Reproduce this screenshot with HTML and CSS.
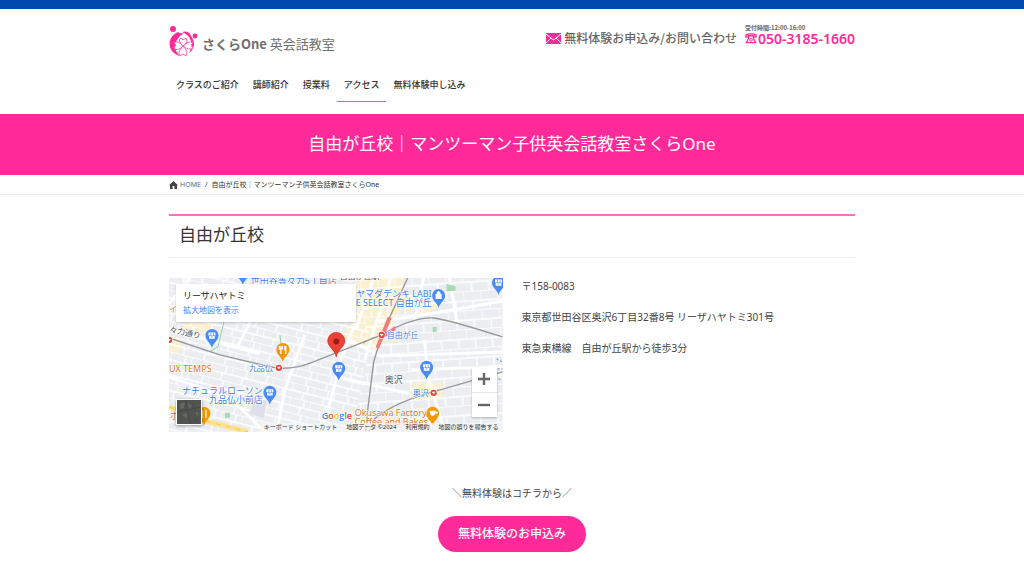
FILE: index.html
```html
<!DOCTYPE html>
<html lang="ja">
<head>
<meta charset="utf-8">
<meta name="viewport" content="width=device-width, initial-scale=1">
<title>自由が丘校｜マンツーマン子供英会話教室さくらOne</title>
<link rel="stylesheet" href="styles.css">
</head>
<body>
<header class="site-header">
  <div class="container">
    <div class="header-top">
      <a class="logo" href="#">
        <svg class="logo-mark" viewBox="0 0 30 34" aria-hidden="true">
          <circle cx="4" cy="4" r="3" fill="#ff2a9a"/><circle cx="26" cy="11" r="2.400" fill="#ff2a9a"/>
          <path d="M9 7C-3 12-2 28 11 31C4 25 4 15 15 8Q11 9 9 7Z" fill="#ff2a9a"/>
          <path d="M13 7Q20 5 22 11Q29 21 20 28Q25 19 20 12Q17 8 13 7Z" fill="#ff2a9a"/>
          <path d="M14 21Q8 15 12 13L14 15L17 13Q20 17 14 21Q20 15 24 18L22 20L24 23Q20 26 14 21Q20 27 17 31L14 29L11 31Q8 27 14 21Q8 27 5 23L7 20L5 18Q9 15 14 21Z" fill="#fff" stroke="#ff5fb3" stroke-width="1"/>
        </svg>
        <span class="logo-name"><b>さくらOne</b> 英会話教室</span>
      </a>
      <div class="contact">
        <a class="inquiry" href="#">
          <svg class="mail" viewBox="0 0 15 11" aria-hidden="true"><path d="M0 0H15V11H0Z" fill="#ff2a9a"/><path d="M0 1L7.500 7L15 1M0 10L5 5M15 10L10 5" fill="none" stroke="#fff"/></svg>
          無料体験お申込み/お問い合わせ
        </a>
        <div class="phone">
          <span class="hours">受付時間:12:00-16:00</span>
          <a class="number" href="tel:050-3185-1660">
            <svg class="tel" viewBox="0 0 13 11" aria-hidden="true"><path d="M1 4V1.500Q6.500-.5 12 1.500V4H9.500V2.500H3.500V4Z M4 3V5L1.500 10H11.500L9 5V3" fill="none" stroke="#ff2a9a" stroke-width="1.400"/><circle cx="6.500" cy="7" r="1.500" fill="none" stroke="#ff2a9a"/></svg>050-3185-1660</a>
        </div>
      </div>
    </div>
    <nav class="main-nav">
      <a href="#">クラスのご紹介</a>
      <a href="#">講師紹介</a>
      <a href="#">授業料</a>
      <a class="current" href="#" aria-current="page">アクセス</a>
      <a href="#">無料体験申し込み</a>
    </nav>
  </div>
</header>
<div class="page-banner"><h1>自由が丘校｜マンツーマン子供英会話教室さくらOne</h1></div>
<nav class="breadcrumb" aria-label="パンくずリスト">
  <div class="container crumbs">
    <a href="#"><svg class="home" viewBox="0 0 9 8" aria-hidden="true"><path d="M4.500 0L9 4.200H8V8H5.400V5H3.600V8H1V4.200H0Z" fill="#444"/></svg>HOME</a>
    <span>/</span>
    <span class="here">自由が丘校｜マンツーマン子供英会話教室さくらOne</span>
  </div>
</nav>
<main class="container">
  <h2 class="section-title">自由が丘校</h2>
  <div class="access">
    <div class="map">
      <svg class="map-art" viewBox="169 278 334 154" preserveAspectRatio="xMidYMid slice" role="img" aria-label="自由が丘周辺の地図">
        <defs>
          <pattern id="streets-a" width="21" height="15" patternUnits="userSpaceOnUse" patternTransform="rotate(14)"><path d="M0 0H21M0 8H21M0 0V8M12 8V15M15 0V8" fill="none" stroke="#fff" stroke-width="1.300"/></pattern>
          <pattern id="streets-b" width="17" height="19" patternUnits="userSpaceOnUse" patternTransform="rotate(-4)"><path d="M0 0H17M0 10H17M0 0V10M9 10V19" fill="none" stroke="#fff" stroke-width="1.300"/></pattern>
          <g id="pin"><path d="M0 12C-1 7-6.500 5-6.500-.5A6.500 6.500 0 0 1 6.500-.5C6.500 5 1 7 0 12Z"/></g>
          <g id="shop"><use href="#pin" fill="#4a8cf5"/><path d="M-3.500-3.500H3.500V-.5H-3.500ZM-2.800 0H2.800V2.800H-2.800Z" fill="#fff"/><path d="M-1 0V-3M1.500 0V-3M-1 1H1" stroke="#4a8cf5" stroke-width=".7"/></g>
          <g id="station"><circle r="3.800" fill="#fff"/><circle r="3.200" fill="#e5453a"/><path d="M-2-1H2L0 1.500Z" fill="#fff"/></g>
        </defs>
        <rect x="169" y="278" width="334" height="154" fill="#ebedf0"/>
        <path d="M356 278H404L398 318L372 352L340 340L356 318ZM400 290L440 305L425 315L400 308ZM169 335L182 339L178 354L169 352ZM411 383H443V400H411ZM185 322L215 324L210 334L183 330Z" fill="#fbf1d2"/>
        <path d="M169 278H350L372 340L352 432H169Z" fill="url(#streets-a)"/>
        <path d="M350 278H503V432H352L372 340Z" fill="url(#streets-b)"/>
        <g fill="none" stroke="#fff" stroke-width="3">
          <path d="M356 322L341 360L335 385L322 432M391 278L365 360M169 304L190 278M169 377L230 398L265 432M305 335L285 390L277 432M338 377L410 394M375 322Q440 313 503 301M412 370L503 367M424 278L415 320M425 340L428 375L445 432M374 278L356 330M250 322L237 348M169 330L260 354M450 278L458 325M350 340L380 356L503 352"/>
        </g>
        <path d="M224 322L218 347L209 352M280 335L282 349M363 344L374 337" fill="none" stroke="#96cfaa"/>
        <path d="M447 284L456 286V291H447ZM433 327H437V332H433ZM225 413H230V418H225Z" fill="#a8d8b4"/>
        <path d="M254 403L267 400L264 418L249 414Z" fill="#dde0e9"/>
        <path d="M169 407L208 422L248 432" fill="none" stroke="#fde293" stroke-width="5"/>
        <path d="M169 407L208 422L248 432" fill="none" stroke="#f4c84c" stroke-dasharray="5 5"/>
        <g fill="none" stroke="#999" stroke-width="1.400">
          <path d="M169 338L220 355L266 366Q288 372 311 363L382 335Q413 317 434 318Q450 320 503 337"/>
          <path d="M408 278L382 335L374 362L368 410L366 432M503 372L444 389Q394 402 375 419L369 432"/>
        </g>
        <path d="M388 317L392 318L385 335L395 326L396 330L384 338L379 349L376 347Z" fill="#f07d78"/>
        <path d="M497 359L503 362M498 369H503M499 379L503 380" stroke="#4a8cf5" stroke-dasharray="2 2"/>
        <use href="#shop" x="243" y="273"/><use href="#shop" x="212" y="336"/><use href="#shop" x="339" y="369"/><use href="#shop" x="427" y="368"/><use href="#shop" x="270" y="393"/><use href="#shop" x="499" y="283"/>
        <use href="#pin" x="439" y="296" fill="#4a8cf5"/><path d="M436 294H442V299H436ZM437 294V293Q439 289 441 293V294" fill="#fff"/>
        <g fill="#f29900"><use href="#pin" x="283" y="350"/><use href="#pin" x="433" y="414"/><use href="#pin" x="204" y="414"/></g>
        <path d="M281 346V354M279.500 346V349H282.500V346M286 346V354M285 346V350H286M202 410V418M206 410V418" fill="none" stroke="#fff" stroke-width="1.200"/>
        <path d="M430 411H436Q436 416 433 416Q430 416 430 411M436 412H438V414H436M430 418H436" fill="#fff"/>
        <use href="#station" x="382" y="335"/><use href="#station" x="279" y="368"/><use href="#station" x="434" y="393"/><use href="#station" x="169" y="340"/>
        <path d="M336.500 357C335.500 350 328 347 328 341A8.500 8.500 0 0 1 345 341C345 347 337.500 350 336.500 357Z" fill="#ea4335" stroke="#c5221f" stroke-width=".7"/><circle cx="336.500" cy="341.500" r="3" fill="#9b1c17"/>
        <g class="map-label blue">
          <text x="251" y="284">世田谷等々力5丁目店</text>
          <text x="432" y="297" text-anchor="end">ヤマダデンキ LABI</text>
          <text x="432" y="306" text-anchor="end">LIFE SELECT 自由が丘</text>
          <text class="small" x="387" y="338">自由が丘</text>
          <text class="small" x="249" y="371">九品仏</text>
          <text class="small" x="413" y="396">奥沢</text>
          <text x="263" y="394" text-anchor="end">ナチュラルローソン</text>
          <text x="263" y="403" text-anchor="end">九品仏小前店</text>
        </g>
        <g class="map-label orange"><text x="169" y="372">UX TEMPS</text><text x="355" y="416">Okusawa Factory</text><text x="355" y="425">Coffee and Bakes</text><text x="170" y="419">ボ</text><text class="small" x="169" y="312">イ</text></g>
        <g class="map-label dark"><text x="385" y="383">奥沢</text><text class="small" x="169" y="332" transform="rotate(12 169 332)">々力通り</text><text class="small" x="340" y="279">自由が丘駅</text></g>
        <text class="google" x="322" y="419"><tspan fill="#4285f4">G</tspan><tspan fill="#ea4335">o</tspan><tspan fill="#fbbc04">o</tspan><tspan fill="#4285f4">g</tspan><tspan fill="#34a853">l</tspan><tspan fill="#ea4335">e</tspan></text>
      </svg>
      <div class="place-card"><span>リーサハヤトミ</span><a href="#">拡大地図を表示</a></div>
      <button class="satellite" type="button" aria-label="航空写真を表示">
        <svg viewBox="0 0 24 24" aria-hidden="true"><rect width="24" height="24" fill="#50534f"/><path d="M2 4L8 2L7 8L3 9ZM11 3L15 6L12 10ZM17 11L22 13L19 18ZM5 15L11 12L10 19ZM14 19L17 21" fill="#646861"/><path d="M0 12L24 7M8 0L13 24M2 1V9M16 3L20 22" stroke="#454b46" fill="none"/></svg>
      </button>
      <div class="zoom">
        <button type="button" aria-label="拡大"><svg viewBox="0 0 12 12" aria-hidden="true"><path d="M6 0V12M0 6H12" stroke="#666" stroke-width="2.400"/></svg></button>
        <button type="button" aria-label="縮小"><svg viewBox="0 0 12 12" aria-hidden="true"><path d="M0 6H12" stroke="#666" stroke-width="2.400"/></svg></button>
      </div>
      <div class="map-footer"><span>キーボード ショートカット</span><span>地図データ ©2024</span><span>利用規約</span><span>地図の誤りを報告する</span></div>
    </div>
    <div class="address">
      <p>〒158-0083</p>
      <p>東京都世田谷区奥沢6丁目32番8号 リーザハヤトミ301号</p>
      <p>東急東横線　自由が丘駅から徒歩3分</p>
    </div>
  </div>
  <div class="trial">
    <p>＼無料体験はコチラから／</p>
    <a class="trial-button" href="#">無料体験のお申込み</a>
  </div>
</main>
</body>
</html>
```
FILE: styles.css
```css
* { box-sizing: border-box; }
body {
  margin: 0;
  background: #fff;
  color: #444;
  font-family: "Noto Sans", "Noto Sans CJK JP", sans-serif;
  font-size: 10px;
  line-height: 16px;
}
a { color: inherit; text-decoration: none; }
h1, h2, p { margin: 0; font-weight: 400; }
svg { display: block; }
.container { max-width: 686px; margin: 0 auto; }
.site-header { border-top: 9px solid #004aad; padding: 16px 0 12px; }
.header-top { display: flex; justify-content: space-between; align-items: flex-start; }
.logo { display: flex; align-items: center; gap: 3px; color: #707070; font-family: "Noto Sans CJK JP", sans-serif; font-size: 13px; line-height: 34px; }
.logo-mark { width: 30px; height: 34px; }
.logo-name { padding-top: 3px; line-height: 31px; }
.logo-name b { font-weight: 700; }
.contact { display: flex; gap: 8px; color: #666; font-family: "Noto Sans CJK JP", sans-serif; }
.inquiry { display: flex; align-items: center; gap: 3px; font-size: 12px; font-weight: 500; line-height: 26px; }
.mail { width: 15px; height: 11px; }
.phone { display: flex; flex-direction: column; font-weight: 700; }
.hours { font-size: 6px; line-height: 6px; }
.number { display: flex; align-items: center; gap: 1px; color: #ff2a9a; font-family: "Noto Sans", sans-serif; font-size: 14px; font-weight: 600; line-height: 15px; }
.tel { width: 12px; height: 11px; }
.main-nav { display: flex; margin-top: 11px; font-size: 9px; font-weight: 500; color: #333; }
.main-nav a { padding: 7px 7px 8px; border-bottom: 1px solid transparent; }
.main-nav a.current { border-bottom-color: #ff4fac; }
.page-banner { background: #ff2a9a; color: #fff; padding: 14px 15px 16px; text-align: center; }
.page-banner h1 { font-size: 17px; line-height: 31px; }
.breadcrumb { border-bottom: 1px solid #eee; font-size: 7px; line-height: 19px; }
.crumbs { display: flex; gap: 4px; }
.crumbs a { display: flex; align-items: center; gap: 2px; color: #666; }
.crumbs .here { color: #333; }
.home { width: 9px; height: 8px; }
.section-title { margin: 19px 0 20px; padding: 4px 10px 7px; border-top: 2px solid #ff6fbb; border-bottom: 1px solid #eee; color: #333; font-size: 17px; line-height: 30px; }
.access { display: grid; grid-template-columns: 1fr 1fr; gap: 19px; }
.map { position: relative; overflow: hidden; }
.map-art { width: 100%; height: auto; }
.map-label { font-size: 9px; paint-order: stroke; stroke: #fff; stroke-width: 1px; }
.map-label .small { font-size: 8px; }
.blue { fill: #3b7fe0; }
.orange { fill: #dc7a20; }
.dark { fill: #555; }
.google { font-family: "Open Sans", sans-serif; font-size: 9px; font-weight: 600; paint-order: stroke; stroke: #fff; stroke-width: 1px; }
.place-card { position: absolute; top: 6px; left: 7px; width: 54%; padding: 4px 7px 5px; background: #fff; box-shadow: 0 1px 2px #0003; display: flex; flex-direction: column; font-size: 9px; line-height: 15px; color: #222; }
.place-card a { color: #3b86f0; font-size: 8px; line-height: 14px; }
.satellite { position: absolute; left: 7px; bottom: 7px; width: 26px; height: 26px; padding: 0; border: 1px solid #fff; box-shadow: 0 1px 3px #0006; }
.zoom { position: absolute; right: 6px; bottom: 15px; width: 25px; background: #fff; box-shadow: 0 1px 2px #0004; }
.zoom button { display: grid; place-items: center; width: 100%; height: 25px; padding: 0; border: 0; background: none; }
.zoom button + button { border-top: 1px solid #e6e6e6; }
.zoom svg { width: 12px; height: 12px; }
.map-footer { position: absolute; right: 0; bottom: 0; display: flex; gap: 9px; padding: 0 4px; background: #f5f5f5b3; color: #333; font-size: 6px; line-height: 9px; white-space: nowrap; }
.address { display: flex; flex-direction: column; gap: 15px; }
.trial { margin-top: 53px; display: flex; flex-direction: column; align-items: center; gap: 15px; }
.trial-button { padding: 8px 20px; border-radius: 20px; background: #ff2a9a; color: #fff; font-size: 12px; font-weight: 500; line-height: 20px; }
```
